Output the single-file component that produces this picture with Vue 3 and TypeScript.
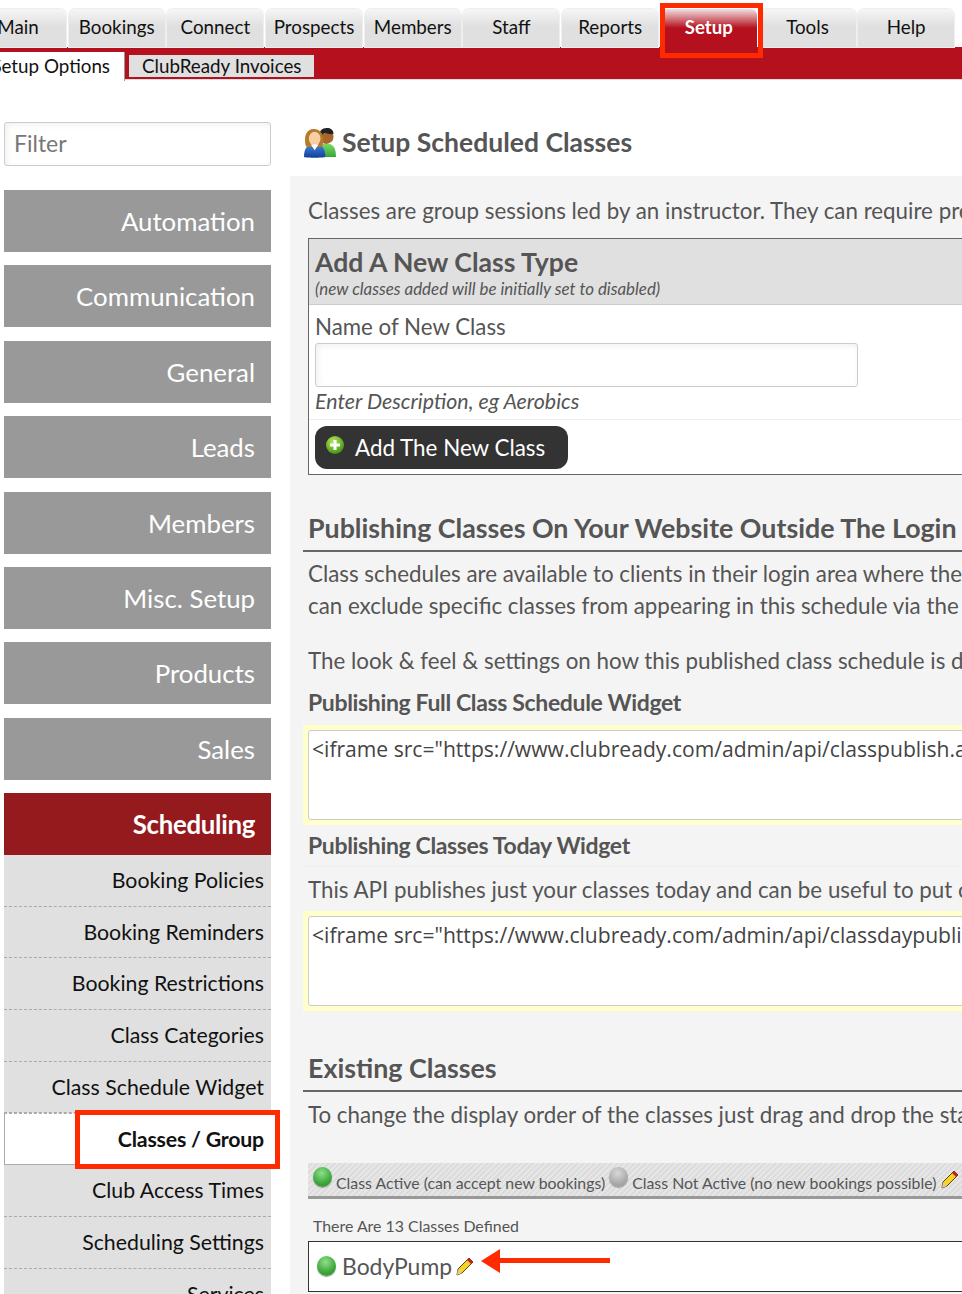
<script setup lang="ts">
const tabs = ["Main", "Bookings", "Connect", "Prospects", "Members", "Staff", "Reports", "Setup", "Tools", "Help"];
const groups = ["Automation", "Communication", "General", "Leads", "Members", "Misc. Setup", "Products", "Sales"];
const links = [
  "Booking Policies",
  "Booking Reminders",
  "Booking Restrictions",
  "Class Categories",
  "Class Schedule Widget",
  "Classes / Group",
  "Club Access Times",
  "Scheduling Settings",
  "Services",
];
const fullWidget = '<iframe src="https://www.clubready.com/admin/api/classpublish.asp?id=1" width="100%"></iframe>';
const todayWidget = '<iframe src="https://www.clubready.com/admin/api/classdaypublish.asp?id=1" width="100%"></iframe>';
</script>

<template>
  <div class="page">
    <nav class="tabs">
      <a v-for="t in tabs" :key="t" class="tab" :class="{ 'tab--on': t === 'Setup' }">{{ t }}</a>
    </nav>
    <div class="subbar">
      <a class="sub sub--on">Setup Options</a>
      <a class="sub">ClubReady Invoices</a>
    </div>

    <div class="columns">
      <aside class="side">
        <input class="filter" placeholder="Filter" />
        <a v-for="g in groups" :key="g" class="group">{{ g }}</a>
        <a class="group group--on">Scheduling</a>
        <ul class="links">
          <li v-for="l in links" :key="l" :class="{ current: l === 'Classes / Group' }">{{ l }}</li>
        </ul>
      </aside>

      <main class="main">
        <h1 class="title">
          <svg class="users" viewBox="0 0 34 32" width="33" height="31">
            <defs>
              <linearGradient id="shirtb" x1="0" y1="0" x2="0" y2="1">
                <stop offset="0" stop-color="#3f86dc" />
                <stop offset="1" stop-color="#123f9a" />
              </linearGradient>
              <linearGradient id="shirtg" x1="0" y1="0" x2="0" y2="1">
                <stop offset="0" stop-color="#7fd86a" />
                <stop offset="1" stop-color="#35a83a" />
              </linearGradient>
            </defs>
            <path d="M13 31c0-10 4-14 11-14s10 4 10 14z" fill="url(#shirtg)" />
            <circle cx="24" cy="10" r="7.5" fill="#a8682c" />
            <path d="M16.5 10c0-6 3-9 8-9 4 0 7 2 7 6-3 1-6 0-9-1-2 1-3 2-3 4z" fill="#222" />
            <path d="M1 31c0-9 3-13 11-13s11 4 11 13c-3 1-19 1-22 0z" fill="url(#shirtb)" />
            <path d="M3 20C0 9 4 2 11 2s12 6 9 18c-2 1-15 1-17 0z" fill="#b77a2a" />
            <ellipse cx="12" cy="12" rx="6" ry="7" fill="#f8cfa5" />
            <path d="M8 18h8l-4 6z" fill="#fff" />
          </svg>
          Setup Scheduled Classes
        </h1>

        <div class="panel">
          <p class="line intro">Classes are group sessions led by an instructor. They can require prepayment or booking credits.</p>

          <section class="addbox">
            <header class="addhead">
              <h2>Add A New Class Type</h2>
              <em>(new classes added will be initially set to disabled)</em>
            </header>
            <div class="addbody">
              <label>Name of New Class</label>
              <input class="nameinput" />
              <em class="hint">Enter Description, eg Aerobics</em>
            </div>
            <div class="addfoot">
              <button class="addbtn">
                <svg class="plus" viewBox="0 0 20 20" width="20" height="20">
                  <defs>
                    <radialGradient id="plusg" cx="40%" cy="30%" r="75%">
                      <stop offset="0" stop-color="#b4e85a" />
                      <stop offset="1" stop-color="#3f8f12" />
                    </radialGradient>
                  </defs>
                  <circle cx="10" cy="10" r="9" fill="url(#plusg)" />
                  <path d="M10 5v10M5 10h10" stroke="#fff" stroke-width="3" />
                </svg>
                Add The New Class
              </button>
            </div>
          </section>

          <h2 class="section first">Publishing Classes On Your Website Outside The Login Area</h2>
          <p class="line l1">Class schedules are available to clients in their login area where they can book. You</p>
          <p class="line l2">can exclude specific classes from appearing in this schedule via the class settings.</p>
          <p class="line l3">The look &amp; feel &amp; settings on how this published class schedule is displayed are set</p>

          <h3 class="widget w1">Publishing Full Class Schedule Widget</h3>
          <div class="glow"><textarea class="code" readonly wrap="off" :value="fullWidget"></textarea></div>

          <h3 class="widget w2">Publishing Classes Today Widget</h3>
          <p class="line l4">This API publishes just your classes today and can be useful to put on your home page.</p>
          <div class="glow glow--today"><textarea class="code" readonly wrap="off" :value="todayWidget"></textarea></div>

          <h2 class="section second">Existing Classes</h2>
          <p class="line l5">To change the display order of the classes just drag and drop the status icon up or down.</p>

          <div class="legend">
            <span class="ball ball--lg"></span>
            <span>Class Active (can accept new bookings)</span>
            <span class="ball ball--lg ball--off"></span>
            <span>Class Not Active (no new bookings possible)</span>
            <svg class="pencil pencil--legend" viewBox="0 0 20 20" width="20" height="20">
              <path d="M3 13 14 2l4 4L7 17l-5 2z" fill="#f5d327" stroke="#5a4308" stroke-width="1" />
              <path d="M14 2l4 4-2 2-4-4z" fill="#c8202a" />
              <path d="M2 19l1-6 4 4z" fill="#e8c79a" />
            </svg>
          </div>

          <p class="count">There Are 13 Classes Defined</p>
          <div class="classrow">
            <span class="ball"></span>
            <span class="classname">BodyPump</span>
            <svg class="pencil pencil--row" viewBox="0 0 20 20" width="20" height="20">
              <path d="M3 13 14 2l4 4L7 17l-5 2z" fill="#f5d327" stroke="#5a4308" stroke-width="1" />
              <path d="M14 2l4 4-2 2-4-4z" fill="#c8202a" />
              <path d="M2 19l1-6 4 4z" fill="#e8c79a" />
            </svg>
          </div>
        </div>
      </main>
    </div>

    <!-- annotations drawn over the screenshot -->
    <div class="mark mark--setup"></div>
    <div class="mark mark--classes"></div>
    <svg class="arrow" viewBox="0 0 130 26" width="130" height="26">
      <path d="M0 13 19 1v9h110v5H19v10z" fill="#ff2a00" />
    </svg>
  </div>
</template>

<style scoped>
.page {
  position: relative;
  width: 962px;
  height: 1294px;
  overflow: hidden;
  background: #fff;
  font-family: Lato, "Liberation Sans", sans-serif;
  color: #555;
}

/* top tabs */
.tabs {
  display: flex;
  gap: 2.7px;
  margin-left: -30px;
  padding-top: 9px;
  height: 38px;
}
.tab {
  flex: none;
  width: 96px;
  height: 38px;
  box-sizing: border-box;
  border-radius: 6px 6px 0 0;
  background: linear-gradient(#f6f6f6, #e0e0e0 45%);
  box-shadow: 0 0 0 1px #eee;
  color: #111;
  font-size: 18.8px;
  line-height: 36px;
  text-align: center;
}
.tab--on {
  background: linear-gradient(#f2dfe1, #b5101e 50%);
  box-shadow: none;
  color: #fff;
  font-weight: 700;
  font-size: 18.6px;
}

.subbar {
  display: flex;
  align-items: flex-start;
  height: 32px;
  background: #b5101e;
  border-bottom: 1px solid #ddd;
}
.sub {
  flex: none;
  margin-top: 8px;
  height: 22px;
  padding: 0 13px;
  margin-left: 4px;
  background: #e0e0e0;
  color: #111;
  font-size: 18.8px;
  line-height: 22px;
}
.sub--on {
  margin: 5px 0 0 -14px;
  height: 29px;
  width: 124px;
  padding: 0 14px 0 0;
  background: #fff;
  border-right: 1px solid #999;
  line-height: 28px;
  text-align: right;
}

.columns {
  display: flex;
  align-items: flex-start;
}

/* sidebar */
.side {
  flex: none;
  width: 267px;
  margin: 42px 19px 0 4px;
}
.filter {
  display: block;
  width: 100%;
  height: 44px;
  box-sizing: border-box;
  margin-bottom: 24px;
  padding: 0 9px 2px;
  border: 1px solid #ccc;
  border-radius: 3px;
  box-shadow: inset 2px 2px 6px #f0f0f0;
  font-family: inherit;
  font-size: 23px;
}
.filter::placeholder {
  color: #777;
  opacity: 1;
}
.group {
  display: block;
  height: 62px;
  margin-bottom: 13.38px;
  padding-right: 16px;
  background: #999;
  color: #fff;
  font-size: 25.8px;
  line-height: 63px;
  text-align: right;
}
.group--on {
  margin-bottom: 0;
  background: #951a1e;
  font-weight: 700;
  letter-spacing: -0.3px;
}
.links {
  margin: 0;
  padding: 0;
  list-style: none;
  background: #e0e0e0;
}
.links li {
  height: 51.7px;
  box-sizing: border-box;
  padding-right: 7px;
  border-bottom: 1px dashed #aaa;
  color: #111;
  font-size: 21.3px;
  line-height: 50px;
  text-align: right;
}
.links li.current {
  background: #fff;
  border: 1px solid #aaa;
  border-top-style: dashed;
  border-right: 0;
  font-weight: 700;
  letter-spacing: -0.2px;
}

/* main column */
.main {
  flex: 1;
  min-width: 0;
}
.title {
  display: flex;
  align-items: center;
  gap: 6px;
  height: 54px;
  margin: 35px 0 7px 13px;
  color: #555;
  font-size: 26.5px;
  font-weight: 700;
}
.panel {
  height: 1118px;
  padding: 0 0 0 18px;
  background: #f4f4f4;
  overflow: hidden;
}
.line {
  margin: 0;
  white-space: nowrap;
  font-size: 22.35px;
  line-height: 33px;
}
.intro {
  margin-top: 18px;
}

.addbox {
  width: 800px;
  height: 237px;
  box-sizing: border-box;
  margin-top: 11px;
  border: 1px solid #666;
  background: #fff;
}
.addhead {
  height: 66px;
  box-sizing: border-box;
  padding: 7px 6px 0;
  background: #e0e0e0;
  border-bottom: 1px solid #ccc;
}
.addhead h2 {
  margin: 0;
  font-size: 26.6px;
  line-height: 33px;
}
.addhead em {
  display: block;
  font-size: 16.9px;
  line-height: 20px;
}
.addbody {
  height: 115px;
  box-sizing: border-box;
  padding: 6px 6px 0;
  border-bottom: 1px solid #eee;
}
.addbody label {
  display: block;
  font-size: 22.3px;
  line-height: 32px;
}
.nameinput {
  display: block;
  width: 543px;
  height: 44px;
  box-sizing: border-box;
  border: 1px solid #ccc;
  border-radius: 3px;
  box-shadow: inset 2px 2px 6px #f0f0f0;
}
.hint {
  display: block;
  font-size: 21.4px;
  line-height: 28px;
}
.addfoot {
  padding: 6px 6px 0;
}
.addbtn {
  display: flex;
  align-items: center;
  gap: 10px;
  width: 253px;
  height: 43px;
  padding: 0 0 0 10px;
  border: 0;
  border-radius: 12px;
  background: #333;
  color: #fff;
  font-family: inherit;
  font-size: 22.4px;
}
.plus {
  margin-top: -6px;
}

.section {
  margin: 0 0 0 -5px;
  padding: 0 0 4px 5px;
  border-bottom: 2px solid #666;
  color: #555;
  font-size: 26.8px;
  font-weight: 700;
  line-height: 36px;
  white-space: nowrap;
}
.section.first {
  margin-top: 35px;
}
.section.second {
  margin-top: 39px;
}
.l1 {
  margin-top: 5px;
}
.l2 {
  margin-top: -1px;
}
.l3 {
  margin-top: 22px;
}
.l5 {
  margin-top: 6px;
}
.widget {
  margin: 0 0 0 -5px;
  padding-left: 5px;
  color: #555;
  font-size: 23px;
  font-weight: 700;
  letter-spacing: -0.35px;
  line-height: 33px;
}
.w1 {
  margin-top: 9px;
}
.w2 {
  margin-top: 4px;
  border-bottom: 1px solid #eee;
  height: 37px;
}
.l4 {
  margin-top: 6px;
}
.glow {
  width: 800px;
  height: 100px;
  box-sizing: border-box;
  margin: 6px 0 0 -5px;
  padding: 5px;
  background: #ffc;
}
.glow--today {
  margin-top: 5px;
}
.code {
  display: block;
  width: 100%;
  height: 90px;
  box-sizing: border-box;
  padding: 3px;
  border: 1px solid #ccc;
  border-radius: 3px;
  background: #fff;
  color: #444;
  font-family: "Open Sans", sans-serif;
  font-size: 21.1px;
  line-height: 30px;
  overflow: hidden;
  resize: none;
}

.legend {
  display: flex;
  align-items: flex-end;
  gap: 4px;
  width: 800px;
  height: 36px;
  box-sizing: border-box;
  margin-top: 32px;
  padding: 0 0 3px 5px;
  border-bottom: 3px solid #999;
  background: repeating-linear-gradient(135deg, #e6e6e6 0 2px, #dcdcdc 2px 4px);
  font-size: 15.85px;
  line-height: 20px;
  white-space: nowrap;
}
.count {
  margin: 12px 0 0 5px;
  font-size: 15.9px;
  line-height: 30px;
}
.classrow {
  display: flex;
  align-items: center;
  gap: 6px;
  width: 800px;
  height: 51px;
  box-sizing: border-box;
  padding: 0 0 2px 8px;
  border: 1px solid #333;
  background: #fff;
}
.classname {
  font-size: 22.9px;
}
.ball {
  flex: none;
  width: 19px;
  height: 20px;
  border-radius: 50%;
  background: radial-gradient(circle at 45% 30%, #8fe08a, #3ca63a 60%, #2b8a2b);
  box-shadow: 0 1px 1px #999;
}
.ball--lg {
  margin-bottom: 6px;
}
.ball--off {
  background: radial-gradient(circle at 45% 30%, #d8d8d8, #aaa 60%, #909090);
}
.pencil {
  flex: none;
}
.pencil--legend {
  margin-bottom: 4px;
}
.pencil--row {
  margin-left: -3px;
}

/* annotations */
.mark {
  position: absolute;
  box-sizing: border-box;
  border: 5px solid #ff2a00;
}
.mark--setup {
  left: 660px;
  top: 3px;
  width: 103px;
  height: 55px;
}
.mark--classes {
  left: 75px;
  top: 1110px;
  width: 205px;
  height: 59px;
}
.arrow {
  position: absolute;
  left: 481px;
  top: 1248px;
}
</style>
